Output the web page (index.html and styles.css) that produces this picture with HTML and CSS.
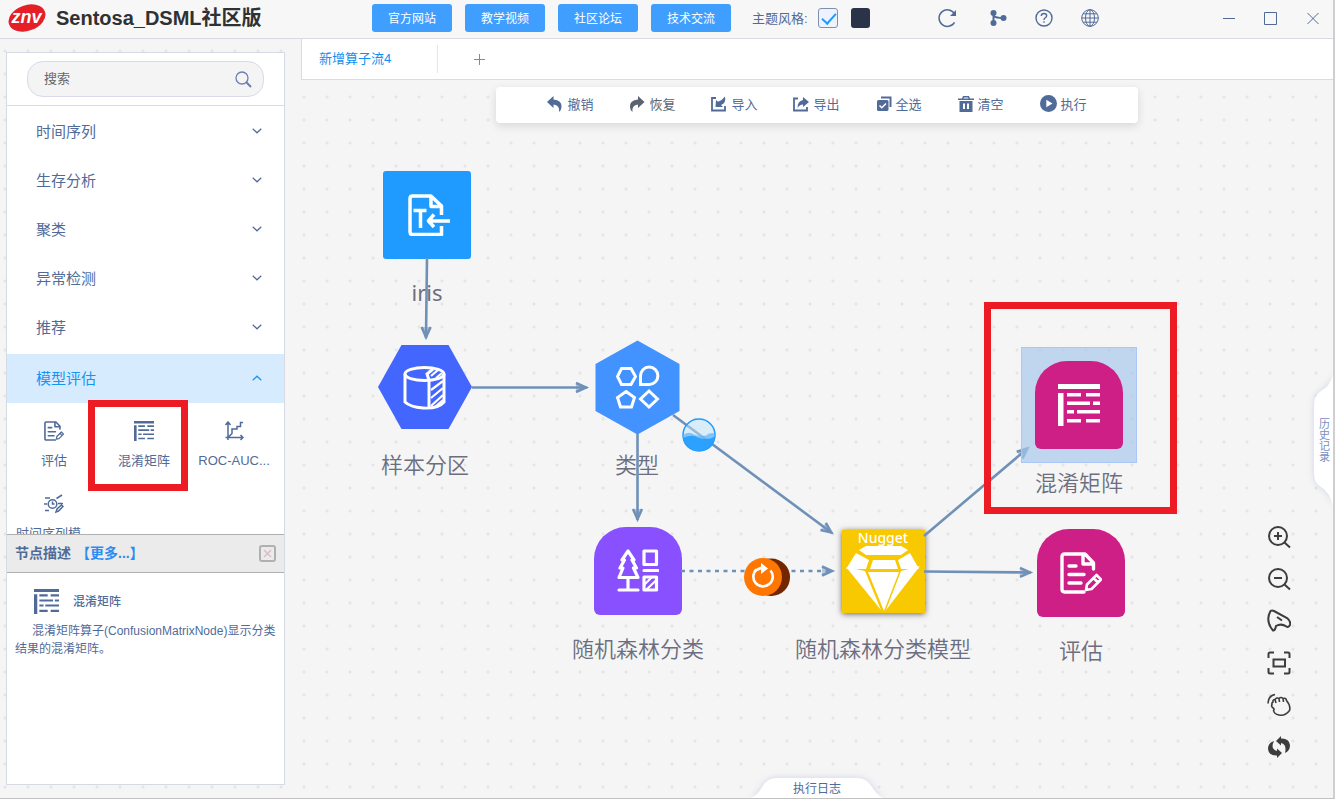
FILE: index.html
```html
<!DOCTYPE html>
<html lang="zh-CN">
<head>
<meta charset="utf-8">
<title>Sentosa_DSML社区版</title>
<link rel="stylesheet" href="styles.css">
</head>
<body>
<svg class="defs" aria-hidden="true">
  <symbol id="i-matrix" viewBox="0 0 42 42"><path fill="currentColor" d="M0 0h42v5H0zM0 9h5.500v33H0zM9 9h14v3.500H9zM28 9h14v3.500H28zM9 17.500h23v3.500H9zM35 17.500h7v3.500h-7zM9 26h7v3.500H9zM19 26h23v3.500H19zM9 35h14v3.500H9zM28 35h14v3.500H28z"/></symbol>
  <symbol id="i-eval" viewBox="0 0 42 42"><g fill="none" stroke="currentColor" stroke-width="3.400" stroke-linejoin="round" stroke-linecap="round"><path d="M24 40H4.500Q2 40 2 37.500V4.500Q2 2 4.500 2H25L33.500 11V17M23 3V12H33M9 14h7M9 22.500h15M9 31h12"/><path stroke-width="2.600" d="M26 38L27 32.500L36.500 23L41 27.500L31.500 37Z M33.500 26L38 30.500"/></g></symbol>
  <symbol id="i-chevron" viewBox="0 0 10 6"><path d="M.7.7L5 4.800L9.300.7" fill="none" stroke="currentColor" stroke-width="1.200"/></symbol>
</svg>
<div class="app">
  <header class="header">
    <div class="brand">
      <svg width="38" height="30" viewBox="0 0 38 30" aria-hidden="true"><ellipse cx="19" cy="15" rx="19" ry="12.800" transform="rotate(-19 19 15)" fill="#e51f28"/><text x="18.500" y="20" text-anchor="middle" class="logo-text">znv</text></svg>
      <h1 class="brand-name">Sentosa_DSML社区版</h1>
    </div>
    <nav class="links">
      <button class="link-btn">官方网站</button><button class="link-btn">教学视频</button><button class="link-btn">社区论坛</button><button class="link-btn">技术交流</button>
    </nav>
    <div class="theme">
      <label for="theme-light">主题风格:</label>
      <input class="theme-check" id="theme-light" type="checkbox" checked>
      <button class="theme-dark" aria-label="深色主题"></button>
    </div>
    <div class="head-icons">
      <button class="icon-btn icon-btn-wide" aria-label="刷新"><svg width="20" height="20" viewBox="0 0 20 20"><path d="M17.600 6A8.300 8.300 0 1 0 17.500 14.300" fill="none" stroke="currentColor" stroke-width="1.500"/><path d="M19 2v6h-6z" fill="currentColor"/></svg></button>
      <button class="icon-btn" aria-label="分支"><svg width="18" height="18" viewBox="0 0 18 18"><g fill="currentColor"><circle cx="4.500" cy="4" r="3"/><circle cx="4.500" cy="14" r="3"/><circle cx="14.500" cy="9" r="3"/></g><path d="M4.500 4v10M4.500 7Q7 9 14 9" fill="none" stroke="currentColor" stroke-width="2"/></svg></button>
      <button class="icon-btn" aria-label="帮助"><svg width="18" height="18" viewBox="0 0 18 18" fill="none" stroke="currentColor" stroke-width="1.400"><circle cx="9" cy="9" r="8"/><path d="M6.300 7Q6.300 4.500 9 4.500Q11.700 4.500 11.700 6.800Q11.700 8 10 9Q9 9.700 9 11"/><path d="M9 12.300v1.500"/></svg></button>
      <button class="icon-btn" aria-label="语言"><svg width="18" height="18" viewBox="0 0 18 18" fill="none" stroke="currentColor"><circle cx="9" cy="9" r="8.300"/><ellipse cx="9" cy="9" rx="4.500" ry="8.300"/><path d="M9 .7v16.600M.7 9h16.600M2 4.800h14M2 13.200h14"/></svg></button>
    </div>
    <div class="win-icons">
      <button class="icon-btn" aria-label="最小化"><svg width="14" height="14" viewBox="0 0 14 14"><path d="M1 7.500h12" stroke="currentColor"/></svg></button>
      <button class="icon-btn" aria-label="最大化"><svg width="14" height="14" viewBox="0 0 14 14"><path d="M.5 1.500h12v12h-12z" fill="none" stroke="currentColor"/></svg></button>
      <button class="icon-btn" aria-label="关闭"><svg width="14" height="14" viewBox="0 0 14 14"><path d="M1.500 2l11 11M12.500 2l-11 11" stroke="currentColor"/></svg></button>
    </div>
  </header>

  <main class="main">
    <aside class="sidebar">
      <div class="search">
        <input type="text" placeholder="搜索" aria-label="搜索">
        <svg width="17" height="17" viewBox="0 0 17 17" aria-hidden="true"><circle cx="7" cy="7" r="6" fill="none" stroke="currentColor" stroke-width="1.300"/><path d="M11.300 11.300L16 16" stroke="currentColor" stroke-width="2"/></svg>
      </div>
      <div class="menu">
        <button class="menu-item">时间序列<svg width="10" height="6"><use href="#i-chevron"/></svg></button>
        <button class="menu-item">生存分析<svg width="10" height="6"><use href="#i-chevron"/></svg></button>
        <button class="menu-item">聚类<svg width="10" height="6"><use href="#i-chevron"/></svg></button>
        <button class="menu-item">异常检测<svg width="10" height="6"><use href="#i-chevron"/></svg></button>
        <button class="menu-item">推荐<svg width="10" height="6"><use href="#i-chevron"/></svg></button>
        <button class="menu-item menu-item-open">模型评估<svg width="10" height="6"><use href="#i-chevron"/></svg></button>
        <div class="ops">
          <button class="op"><svg width="20" height="20"><use href="#i-eval"/></svg><span>评估</span></button>
          <button class="op"><svg width="20" height="20"><use href="#i-matrix"/></svg><span>混淆矩阵</span></button>
          <button class="op"><svg width="20" height="20" viewBox="0 0 20 20" fill="none" stroke="currentColor" stroke-width="1.500"><path d="M4 1v18M1.500 4L4 1l2.500 3M1.500 16.500H19M16.500 14l2.500 2.500L16.500 19M4 16.500L8 12.500V8h5V5.500h3.500V1.500H19"/></svg><span>ROC-AUC...</span></button>
          <button class="op"><svg width="20" height="20" viewBox="0 0 20 20" fill="none" stroke="currentColor" stroke-width="1.500"><circle cx="8.500" cy="10" r="4.300"/><path d="M8.500 7.500V10h2M1 4h5M0 10h3M1 16.500h4M12.500 4.500L18 1M14 9.500h5M12 18l1-3 4.500-4 1.500 1.500-4.500 4.500z"/></svg><span>时间序列模...</span></button>
        </div>
        <div class="mark mark-side"></div>
      </div>
      <section class="desc">
        <div class="desc-head">
          <h2>节点描述</h2><a href="#">【更多...】</a>
          <button class="desc-close" aria-label="关闭"><svg width="17" height="17" viewBox="0 0 17 17" fill="none"><rect x="1" y="1" width="15" height="15" rx="2" stroke="#b0b0b0" stroke-width="2"/><path d="M5 5l7 7M12 5l-7 7" stroke="#d8bfc3" stroke-width="1.500"/></svg></button>
        </div>
        <div class="desc-body">
          <div class="desc-title"><svg width="25" height="25"><use href="#i-matrix"/></svg><h3>混淆矩阵</h3></div>
          <p>混淆矩阵算子(ConfusionMatrixNode)显示分类结果的混淆矩阵。</p>
        </div>
      </section>
    </aside>

    <section class="workspace">
      <div class="tabs"><button class="tab">新增算子流4</button><button class="tab-add" aria-label="新增"><svg width="11" height="11"><path d="M0 5.500h11M5.500 0v11" stroke="#7e8ca0"/></svg></button></div>
      <div class="canvas">
        <div class="toolbar">
          <button class="tool"><svg width="16" height="16" viewBox="0 0 16 16"><path fill="currentColor" d="M0 6L6.500 0V3.500Q15 4 14.500 11Q14.300 14.500 12 16Q13 9 6.500 8.500V12z"/></svg>撤销</button>
          <button class="tool tool-muted"><svg width="16" height="16" viewBox="0 0 16 16"><path fill="currentColor" d="M15.500 6L9 0V3.500Q.5 4 1 11Q1.200 14.500 3.500 16Q2.500 9 9 8.500V12z"/></svg>恢复</button>
          <button class="tool"><svg width="16" height="16" viewBox="0 0 16 16"><path d="M5 2H1v12.500h13V10" fill="none" stroke="currentColor" stroke-width="1.800"/><path fill="currentColor" d="M4.500 11L5 4l2 1.800Q11 4.500 14 .5Q15.500 7 10 9l2 2z"/></svg>导入</button>
          <button class="tool"><svg width="16" height="16" viewBox="0 0 16 16"><path d="M5 2.500H1v12h13V11" fill="none" stroke="currentColor" stroke-width="1.800"/><path fill="currentColor" d="M16 6L10 1v3Q4.500 5 4.500 12Q6.500 8.500 10 8.500V11z"/></svg>导出</button>
          <button class="tool"><svg width="16" height="16" viewBox="0 0 16 16"><path d="M5 1.500h9.500V11" fill="none" stroke="currentColor" stroke-width="2"/><rect x="1" y="4" width="11.500" height="11" rx="1.500" fill="currentColor"/><path d="M3.500 9.500l2.300 2.300L10 7.500" fill="none" stroke="#fff" stroke-width="1.500"/></svg>全选</button>
          <button class="tool"><svg width="16" height="16" viewBox="0 0 16 16"><path fill="currentColor" fill-rule="evenodd" d="M5 0h6l1 2.500h4V4H0V2.500h4zM6 1.500l-.5 1h5l-.5-1zM1.500 5h13v11h-13zM5 7.500V13h2V7.500zM9 7.500V13h2V7.500z"/></svg>清空</button>
          <button class="tool"><svg width="17" height="17" viewBox="0 0 17 17"><circle cx="8.500" cy="8.500" r="8.500" fill="currentColor"/><path d="M6.300 4.700L12.500 8.500L6.300 12.300z" fill="#fff"/></svg>执行</button>
        </div>

        <div class="node node-iris"><div class="glyph"><div class="tile tile-square"><svg width="46" height="43" viewBox="-4 -1 46 43" fill="none" stroke="#fff" stroke-width="3.500" stroke-linejoin="round"><path d="M33.500 32V40.500H4.500Q2 40.500 2 38V4.500Q2 2 4.500 2H23L33.500 12V21M23 3V12.500H33"/><path d="M5.500 16.500h13M12.500 16.500V34M42 27H21M26 20.500L20.500 27L26 33"/></svg></div></div><span class="caption">iris</span></div>

        <div class="node node-sample"><div class="glyph"><svg width="94" height="94" viewBox="0 0 94 94"><path d="M0 47L23.500 5h47L94 47L70.500 89h-47z" fill="#4366ff"/><g fill="none" stroke="#fff" stroke-width="3"><ellipse cx="46.500" cy="34" rx="19.500" ry="6.500"/><path d="M27 34v28q5 5 18 6q15 1 21-6V34M51 40v27M51 40l-2-6 6-5"/></g><path d="M53 50l12-9M53 58l12-10M53 66l12-11M57 67l8-7M53 36l7-6M58 38l6-5" stroke="#fff" stroke-width="2.200"/></svg></div><span class="caption">样本分区</span></div>

        <div class="node node-type"><div class="glyph"><svg width="94" height="94" viewBox="0 0 94 94"><path d="M47.500.5L89.500 24v47L47.500 94.500L5.500 71V24z" fill="#4292ff"/><g fill="none" stroke="#fff" stroke-width="3"><path d="M31.500 28.500h9.500L45.500 36.500L41 44.500h-9.500L27.500 36.500zM50.500 44.500V36A8.700 8.700 0 1 1 59 44.500zM36 51.500L44.500 57.500L41.500 67h-11L27.500 57.500zM59 51L67.500 59L59 67L50.500 59z"/></g></svg></div><span class="caption">类型</span></div>

        <div class="node node-forest"><div class="glyph"><div class="tile tile-purple"><svg width="42" height="43" viewBox="0 0 42 43" fill="none" stroke="#fff" stroke-width="3.200" stroke-linejoin="round" stroke-linecap="round"><path d="M11 2L5 11h2.500L3 19H6L2 28.500h19L16.500 19H19.500L15 11h2zM11 28.500V40M2 41h19M27 2h12.500v13.500H27zM27 21.500h14M27 28h12.500v13H27z"/><path d="M27 36l8-8M29 41l10.500-10" stroke-width="2.200"/></svg></div></div><span class="caption">随机森林分类</span></div>

        <div class="node node-model"><div class="glyph"><div class="nugget"><span>Nugget</span><svg width="76" height="66" viewBox="0 0 76 66" fill="#fff"><path d="M21 0h35l7 4-7 5H21l-7-5zM11 7l13 7-3 9H1zM65 7L53 14l3 9h18zM28 14h22l3 9H25zM1 21l19 4 16 39zM75 20l-19 5-15 39zM23 26h31L39 65z"/></svg></div></div><span class="caption">随机森林分类模型</span></div>

        <div class="node node-eval"><div class="glyph"><div class="tile tile-pink"><svg width="42" height="42"><use href="#i-eval"/></svg></div></div><span class="caption">评估</span></div>

        <svg class="edges" aria-hidden="true">
          <defs><marker id="head" markerUnits="userSpaceOnUse" markerWidth="16" markerHeight="16" refX="12" refY="7" orient="auto"><path d="M1 2.500L11 7L1 11.500" fill="#6f91b8" fill-opacity=".45" stroke="#6f91b8" stroke-width="2.600"/></marker></defs>
          <g transform="translate(-301 -80)" stroke="#6f91b8" stroke-width="2.600" fill="none">
            <path d="M427 258L426 338" marker-end="url(#head)"/>
            <path d="M472 387.500H587" marker-end="url(#head)"/>
            <path d="M637.500 434V520" marker-end="url(#head)"/>
            <path d="M673 415L832 533" marker-end="url(#head)"/>
            <path d="M924 536L1028 448" marker-end="url(#head)"/>
            <path d="M924 571.500L1031 572.500" marker-end="url(#head)"/>
            <path d="M681 571H833" stroke-dasharray="4 4.500" marker-end="url(#head)"/>
          </g>
          <g transform="translate(-301 -80)">
            <circle cx="699" cy="435" r="16" fill="#bfe3fb" fill-opacity=".5" stroke="#1f9bff" stroke-width="1.500"/>
            <path d="M683 435Q689 431 694 434.500Q705 438 709 433.500L714.500 433Q716 450 699 451Q683 450 683 435z" fill="#59b4fb" fill-opacity=".7"/>
            <path d="M683 438Q692 434 698 437.500Q707 441 715 436.500Q714 451 699 451Q684 450 683 438z" fill="#1f9bff" fill-opacity=".85"/>
            <rect x="752" y="558.500" width="38" height="37.500" rx="18.700" fill="#722700"/>
            <circle cx="763" cy="577" r="19" fill="#ff7600"/>
            <path d="M756.500 569.500A9.700 9.700 0 1 0 770.500 570.500" fill="none" stroke="#fff" stroke-width="2.600"/>
            <path d="M755.500 570.500L762 567.500" stroke="#fff" stroke-width="2.600"/>
            <path d="M761 563L768 568.500L761 574z" fill="#fff"/>
          </g>
        </svg>

        <div class="node node-matrix"><div class="glyph glyph-selected"><div class="tile tile-pink"><svg width="42" height="42"><use href="#i-matrix"/></svg></div></div><span class="caption">混淆矩阵</span></div>
        <div class="mark mark-canvas"></div>

        <div class="view-tools">
          <button aria-label="放大"><svg viewBox="0 0 24 24"><circle cx="11" cy="11" r="9"/><path d="M17.500 17.500L23 22.500M7 11h8M11 7v8"/></svg></button>
          <button aria-label="缩小"><svg viewBox="0 0 24 24"><circle cx="11" cy="11" r="9"/><path d="M17.500 17.500L23 22.500M7 11h8"/></svg></button>
          <button aria-label="指针"><svg viewBox="0 0 24 24"><path d="M3.500 2Q5 1 7 2L20 9Q24 12 23 16Q21 19 19.500 17.500Q14 14 9 17Q8 22 6 21.500Q-2 12 3.500 2zM10 8l5 3.500"/></svg></button>
          <button aria-label="适应画布"><svg viewBox="0 0 24 24"><path d="M1.500 7V3Q1.500 1.500 3 1.500H7M17 1.500h4q1.500 0 1.500 1.500V7M22.500 17v4q0 1.500-1.500 1.500H17M7 22.500H3Q1.500 22.500 1.500 21V17M6.500 8.500h11.500v7H6.500z"/></svg></button>
          <button aria-label="拖动"><svg viewBox="0 0 24 24" class="thin"><path d="M1 10.500Q1.500 2.500 8 1.500M6 9Q5.500 6.500 8 6.500Q9.500 4 12 5.500Q14 3.500 16 5.500Q19 4.500 19.500 7.500Q24 13 22.500 17.500Q18 23.500 12 22Q7 21 6.500 17.500Q8 16 5.500 14.500Q4 13 5 11.500Q4.500 10 6 9zM8 6.500l1 3.500M12 5.500l.5 3.500M16 5.500l.5 3.500"/></svg></button>
          <button aria-label="重置"><svg class="solid" viewBox="0 0 24 24"><path d="M9 6L14 1V3.500Q22 3 23 10Q23 16 18 18Q20 9 14 8V10.500zM15 18L10 23V20.500Q2 21 1 14Q1 8 7 6Q3 14 10 16V13.500z"/></svg></button>
        </div>

        <button class="history"><svg width="19" height="130" viewBox="0 0 19 130" aria-hidden="true"><path d="M19 0Q16 11 7 16Q0 20 0 30V98Q0 108 7 112Q16 118 19 130z"/></svg><span>历史记录</span></button>
        <button class="log"><svg width="132" height="20" viewBox="0 0 132 20" aria-hidden="true"><path d="M0 20Q6 18 11 9Q16 0 26 0H106Q116 0 121 9Q126 17 132 20z"/></svg><span>执行日志</span></button>
      </div>
    </section>
  </main>
</div>
</body>
</html>
```
FILE: styles.css
```css
* { box-sizing: border-box; }
body { margin: 0; font-family: "Liberation Sans", "Noto Sans CJK SC", sans-serif; font-size: 13px; color: #516b99; }
button { border: 0; padding: 0; background: none; font: inherit; color: inherit; cursor: pointer; }
h1, h2, h3, p { margin: 0; }
svg { display: block; flex: none; }
.defs { position: absolute; width: 0; height: 0; }

.app {
  display: grid;
  grid-template-rows: 39px 1fr;
  height: 100vh;
  border-right: 2px solid #cdcfd0;
  border-bottom: 1px solid #c2c2c2;
  background: #f5f5f5 radial-gradient(circle at 12px 12px, #e5e5e7 1px, transparent 2px) -7px 39px / 23px 23px;
  overflow: hidden;
}

.header { display: flex; align-items: center; padding: 0 13px 3px 8px; background: #f7f7f7; border-bottom: 1px solid #d8dbe6; }
.brand { display: flex; align-items: center; gap: 10px; width: 364px; }
.brand-name { font: bold 20px/30px "Liberation Sans", "Noto Sans CJK SC", sans-serif; color: #303133; }
.logo-text { font: italic bold 18px "Liberation Sans", sans-serif; fill: #fff; }
.links { display: flex; gap: 13px; }
.link-btn { width: 80px; height: 28px; border-radius: 3px; background: #409eff; color: #fff; font-size: 12px; }
.theme { display: flex; align-items: center; margin-left: 21px; }
.theme-check { appearance: none; position: relative; width: 20px; height: 20px; margin: 0 13px 0 10px; border: 1px solid #7f8fb0; border-radius: 3px; background: #eef2fc; }
.theme-check::after { content: ""; position: absolute; left: 6px; top: 1px; width: 6px; height: 12px; border: solid #1f9bff; border-width: 0 2px 2px 0; rotate: 42deg; }
.theme-dark { width: 19px; height: 20px; border-radius: 3px; background: #2b3348; }
.head-icons { display: flex; align-items: center; gap: 28px; margin-left: 63px; }
.win-icons { display: flex; gap: 28px; margin-left: auto; }
.icon-btn { display: grid; place-items: center; }
.icon-btn-wide { width: 28px; }

.main { display: flex; min-height: 0; }
.sidebar { display: flex; flex-direction: column; width: 279px; margin: 13px 16px 13px 6px; border: 1px solid #d5dae5; background: #fff; }
.search { display: flex; align-items: center; margin: 8px 20px; height: 36px; padding: 0 11px 0 16px; border: 1px solid #d8dae8; border-radius: 16px; background: #f4f4f4; color: #6b7fb5; }
.search input { flex: 1; min-width: 0; padding: 0 0 2px; border: 0; outline: 0; background: none; font: inherit; }
.search input::placeholder { color: #66686e; }
.menu { position: relative; flex: 0 0 429px; border-top: 1px solid #d8dbe6; }
.menu-item { display: flex; align-items: center; justify-content: space-between; width: 100%; height: 49px; padding: 0 22px 0 29px; font-size: 15px; }
.menu-item-open { margin-top: 3px; padding-bottom: 2px; background: #d7ebff; color: #1296f5; }
.menu-item-open svg { rotate: 180deg; }
.ops { display: grid; grid-template-columns: repeat(3, 90px); height: 131px; padding: 18px 2px 0; overflow: hidden; }
.op { display: flex; flex-direction: column; align-items: center; gap: 10px; height: 73px; }
.op span { line-height: 20px; white-space: nowrap; }
.desc { flex: 1; }
.desc-head { display: flex; align-items: center; height: 39px; padding: 0 8px; border: solid #b0b0b0; border-width: 1px 0; background: #ebebeb; line-height: 20px; }
.desc-head h2, .desc-head a { padding-bottom: 2px; font-size: 14px; font-weight: bold; }
.desc-head a { margin-left: 5px; color: #2d8cf0; text-decoration: none; }
.desc-close { margin-left: auto; }
.desc-body { padding: 16px 6px 0 8px; font-size: 12px; line-height: 18px; }
.desc-title { display: flex; align-items: center; gap: 14px; padding-left: 19px; margin-bottom: 8px; }
.desc-title h3 { font-size: 12px; font-weight: 500; }
.desc-body p { text-indent: 17px; word-break: break-all; }

.workspace { display: flex; flex-direction: column; flex: 1; min-width: 0; }
.tabs { display: flex; align-items: center; flex: 0 0 41px; border: solid #d8dbe6; border-width: 0 0 1px 1px; background: #fff; }
.tab { width: 136px; height: 28px; padding: 0 0 4px 17px; border-right: 1px solid #e4e5ee; text-align: left; color: #0f8ff0; }
.tab-add { margin-left: 36px; }
.canvas { position: relative; flex: 1; }
.toolbar { display: flex; align-items: center; justify-content: center; gap: 36px; width: 642px; max-width: 100%; height: 36px; margin: 7px auto; padding-bottom: 3px; border-radius: 4px; background: #fff; box-shadow: 0 3px 10px #0000001f; }
.tool { display: flex; align-items: center; gap: 4px; }
.tool-muted { color: #5c6370; }

.node { position: absolute; display: flex; flex-direction: column; align-items: center; gap: 14px; width: 94px; }
.glyph { display: grid; place-items: center; width: 94px; height: 94px; position: relative; }
.caption { font: 350 22px/32px "Noto Sans", "Noto Sans CJK SC", sans-serif; color: #6c6e80; white-space: nowrap; }
.node-iris { left: 79px; top: 88px; }
.node-iris .caption { font-weight: 400; }
.node-sample { left: 77px; top: 260px; }
.node-type { left: 289px; top: 260px; }
.node-forest { left: 290px; top: 444px; }
.node-model { left: 535px; top: 444px; }
.node-eval { left: 733px; top: 446px; }
.node-matrix { left: 731px; top: 278px; }
.tile { position: relative; display: grid; place-items: center; width: 88px; height: 88px; padding-bottom: 1px; border-radius: 32px 32px 6px 6px; color: #fff; }
.tile-square { border-radius: 3px; background: #1f9bff; }
.tile-purple { background: #8950ff; }
.tile-pink { background: #ce1f87; }
.glyph-selected::before { content: ""; position: absolute; inset: -11px; border: 1px solid #a9c8f8; background: #a7c8eab0; }
.nugget { display: flex; flex-direction: column; align-items: center; width: 83px; height: 83px; background: #f8c800; box-shadow: 0 1px 6px #0009; }
.nugget span { font: 500 14px/16px "Noto Sans", sans-serif; color: #fff; }
.edges { position: absolute; inset: 0; width: 100%; height: 100%; }

.mark { position: absolute; border: 7px solid #ed1c24; pointer-events: none; }
.mark-side { left: 81px; top: 294px; width: 100px; height: 91px; }
.mark-canvas { left: 683px; top: 222px; width: 193px; height: 212px; }

.view-tools { position: absolute; right: 42px; bottom: 39px; display: flex; flex-direction: column; gap: 18px; }
.view-tools svg { width: 24px; height: 24px; fill: none; stroke: #3d3d3d; stroke-width: 2; }
.view-tools .thin { stroke-width: 1.6; }
.view-tools .solid { fill: #3d3d3d; stroke: none; }
.history { position: absolute; right: 0; bottom: 293px; width: 19px; height: 130px; display: grid; place-items: center; }
.history svg, .log svg { grid-area: 1 / 1; fill: #fff; filter: drop-shadow(0 0 3px #a9b4dc80); }
.history span { grid-area: 1 / 1; position: relative; writing-mode: vertical-rl; font-size: 11px; line-height: 16px; color: #7a8fc0; }
.log { position: absolute; left: 50%; bottom: 0; translate: -50%; display: grid; place-items: center; height: 20px; }
.log span { grid-area: 1 / 1; position: relative; padding-top: 3px; font-size: 12px; line-height: 17px; }
```
